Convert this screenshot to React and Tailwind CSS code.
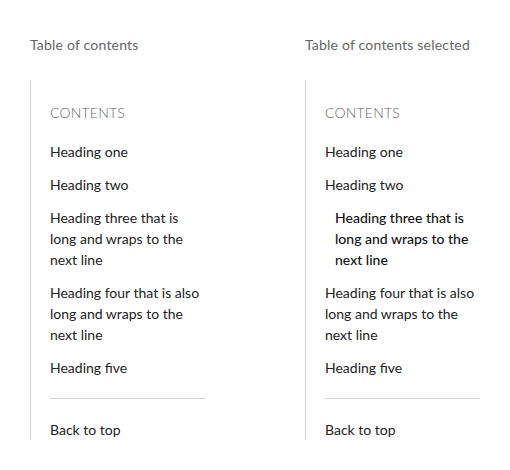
import React from 'react';

const headings = [
  { id: 'one', label: 'Heading one' },
  { id: 'two', label: 'Heading two' },
  { id: 'three', label: 'Heading three that is long and wraps to the next line' },
  { id: 'four', label: 'Heading four that is also long and wraps to the next line' },
  { id: 'five', label: 'Heading five' },
];

const Toc = ({ title, selected }) => (
  <div className="w-[205px]">
    <p className="text-[14px] leading-5 text-[#666] tracking-[0.2px] mb-[25px]">{title}</p>
    <nav className="border-l border-[#d0d0d0] pl-[19px] pt-[22px]">
      <p className="text-[14px] leading-[21px] text-[#666] font-light tracking-[0.2px] mb-[18px]">CONTENTS</p>
      <ul className="w-[155px] flex flex-col gap-3">
        {headings.map((h) => (
          <li
            key={h.id}
            className={
              h.id === selected
                ? 'pl-[10px] text-[14px] leading-[21px] text-[#111] font-medium'
                : 'text-[14px] leading-[21px] text-[#222]'
            }
          >
            {h.label}
          </li>
        ))}
      </ul>
      <div className="w-[155px] border-t border-[#d0d0d0] mt-5 mb-5" />
      <a href="#top" className="block text-[14px] leading-[21px] text-[#222]">Back to top</a>
    </nav>
  </div>
);

const App = () => (
  <div className="min-h-[470px] bg-white pt-[35px] pl-[30px] flex gap-[70px]" style={{ fontFamily: 'Lato, "Noto Sans", sans-serif' }}>
    <Toc title="Table of contents" />
    <Toc title="Table of contents selected" selected="three" />
  </div>
);

export default App;
